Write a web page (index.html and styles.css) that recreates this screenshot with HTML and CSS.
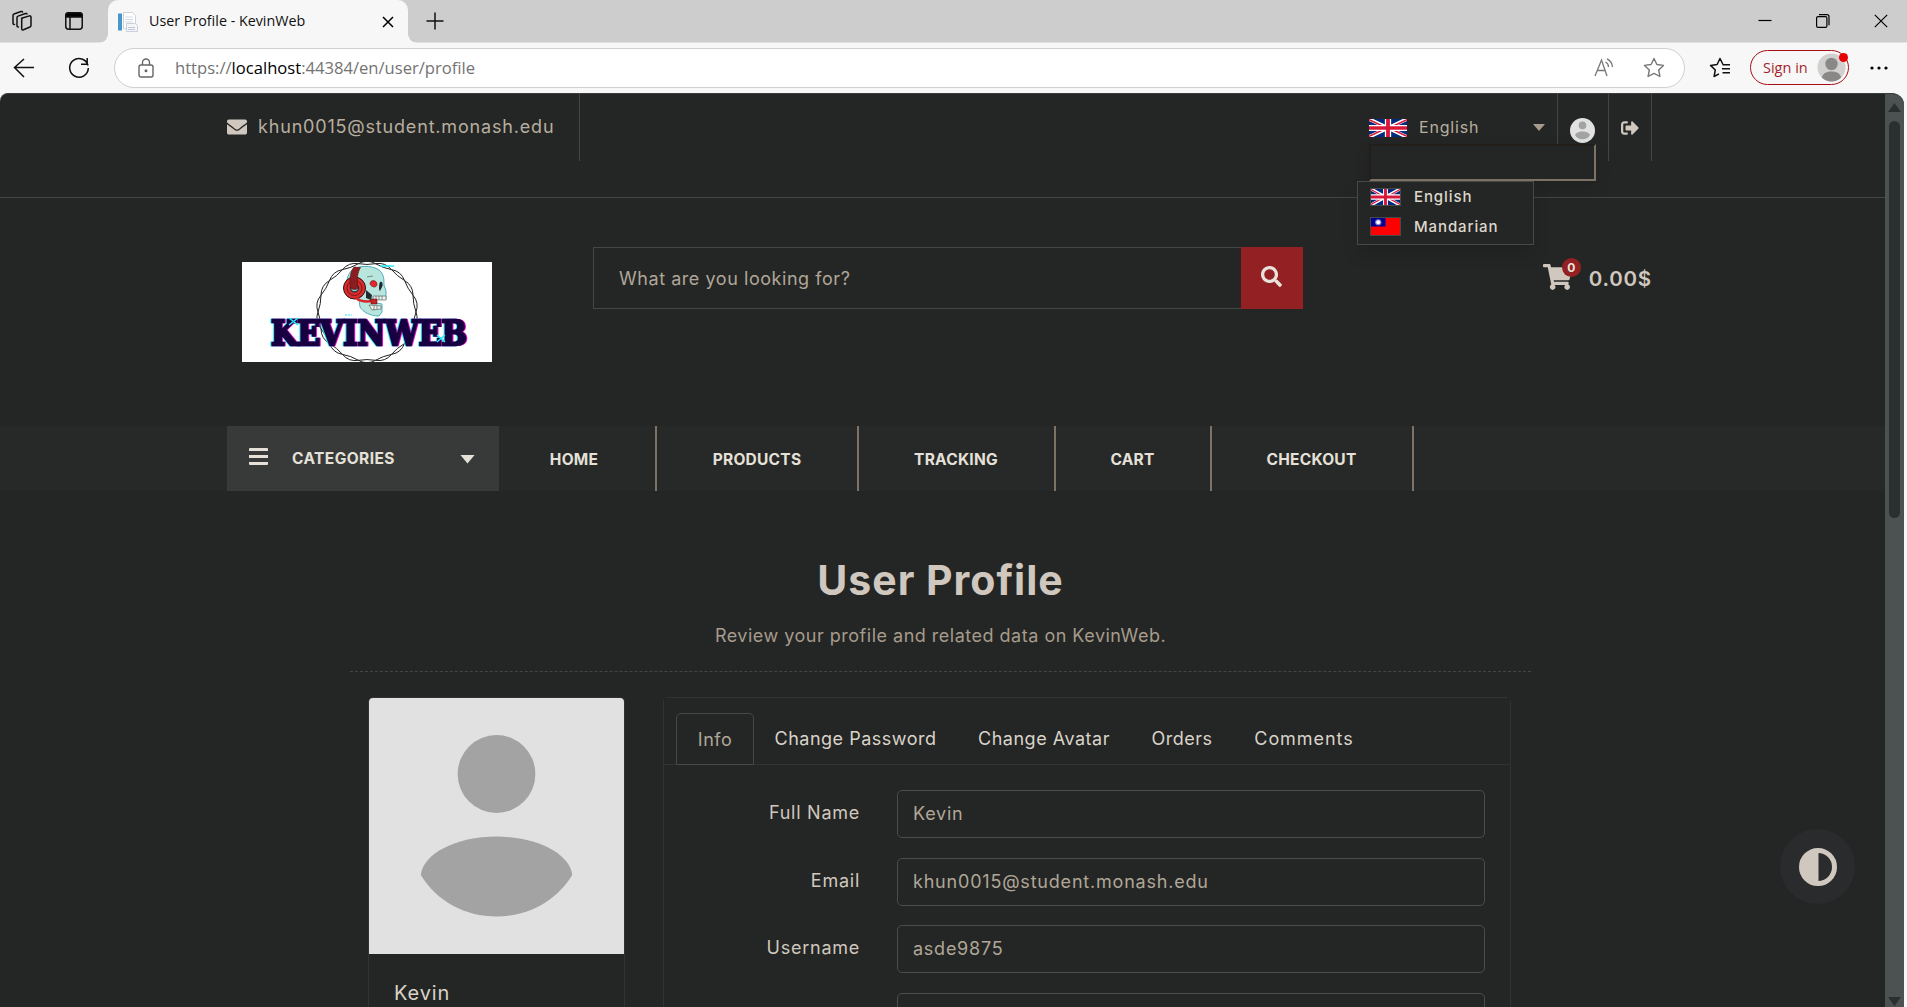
FILE: index.html
```html
<!DOCTYPE html>
<html lang="en">
<head>
<meta charset="utf-8">
<title>User Profile - KevinWeb</title>
<link rel="stylesheet" href="styles.css">
</head>
<body>
<svg width="0" height="0" class="defs" aria-hidden="true">
  <symbol id="uk" viewBox="0 0 60 30" preserveAspectRatio="none">
    <path fill="#012a7d" d="M0 0h60v30H0z"/>
    <path stroke="#fff" stroke-width="6" d="M0 0l60 30M60 0L0 30"/>
    <path stroke="#d8183a" stroke-width="2.4" d="M0 1l28 14M60 29L32 15M60 1L32 15M0 29l28-14"/>
    <path stroke="#fff" stroke-width="10" d="M30 0v30M0 15h60"/>
    <path stroke="#d8183a" stroke-width="6" d="M30 0v30M0 15h60"/>
  </symbol>
  <symbol id="tw" viewBox="0 0 30 18" preserveAspectRatio="none">
    <path fill="#fe0000" d="M0 0h30v18H0z"/><path fill="#000095" d="M0 0h15v9H0z"/>
    <circle cx="7.5" cy="4.5" r="3.3" fill="#8080ca"/><circle cx="7.5" cy="4.5" r="2" fill="#fff"/>
  </symbol>
  <symbol id="person" viewBox="0 0 256 256">
    <path fill="#e1e1e1" d="M0 0h256v256H0z"/>
    <circle cx="128" cy="76" r="39" fill="#a3a3a3"/>
    <path fill="#a3a3a3" d="M52 177C54 156 87 138.500 128 138.500S202 156 204 177C188 203 160 218.500 128 218.500S68 203 52 177z"/>
  </symbol>
</svg>

<header class="tabbar">
  <svg class="i-spaces" width="22" height="22" viewBox="0 0 22 22" fill="none" stroke="#111" stroke-width="1.500" stroke-linejoin="round" stroke-linecap="round"><path d="M10.500 8.300l8-2.400c.8-.2 1.500.3 1.500 1.100v8.500c0 .7-.3 1.200-1 1.500l-6.500 2.800c-1 .4-1.800 0-1.800-1V9.800c0-.7.200-1.200.8-1.500z"/><path d="M7.500 17c-.9.100-1.500-.4-1.500-1.300V7.500c0-.7.300-1.200 1-1.400l7.500-2.600c.8-.2 1.400 0 1.500.6M3.500 14.500c-.9.100-1.500-.4-1.500-1.300V5.500c0-.8.300-1.300 1-1.500l7-2.500c.8-.2 1.400 0 1.500.6"/></svg>
  <svg class="i-actions" width="18" height="18" viewBox="0 0 18 18" fill="none" stroke="#111" stroke-width="1.500"><rect x=".75" y=".75" width="16.500" height="16.500" rx="3"/><path fill="#000" d="M1 5V3a2 2 0 0 1 2-2h12a2 2 0 0 1 2 2v2z"/><path d="M5 5v12"/></svg>
  <div class="tab">
    <svg width="22" height="22" viewBox="0 0 22 22"><path fill="#fff" stroke="#ccd3dc" d="M6.500 1.500h9l3 3v13h-12z"/><path fill="#4797cc" d="M1 2.500h4v17H1z"/><path stroke="#d3d9e3" d="M8 6h8M8 8.500h8M8 11h8"/><path fill="#f4f5f7" stroke="#ccd0da" d="M9.500 12.500h9l2 2v6h-11z"/><path stroke="#c3c6d8" d="M11 16.500h7M11 18.500h7"/></svg>
    <span class="tab-title">User Profile - KevinWeb</span>
    <svg width="12" height="12" viewBox="0 0 12 12" stroke="#000" stroke-width="1.500"><path d="M1 1l10 10M11 1L1 11"/></svg>
  </div>
  <svg class="i-plus" width="18" height="18" viewBox="0 0 18 18" stroke="#111" stroke-width="1.500"><path d="M9 .5v17M.5 9h17"/></svg>
  <div class="win-controls">
    <svg width="14" height="14" viewBox="0 0 14 14" stroke="#000" stroke-width="1.200"><path d="M.5 6.500h13"/></svg>
    <svg width="14" height="14" viewBox="0 0 14 14" fill="none" stroke="#000" stroke-width="1.200"><rect x=".6" y="2.600" width="10.300" height="10.800" rx="1.500"/><path d="M3 .7h8a2 2 0 0 1 2 2v8.600"/></svg>
    <svg width="14" height="14" viewBox="0 0 14 14" stroke="#000" stroke-width="1.200"><path d="M.8.8l12.400 12.400M13.200.8L.8 13.200"/></svg>
  </div>
</header>

<div class="toolbar">
  <svg class="i-back" width="22" height="20" viewBox="0 0 22 20" fill="none" stroke="#111" stroke-width="1.500"><path d="M21 9.500H1.500M11 1L1.500 9.500 11 19"/></svg>
  <svg class="i-reload" width="22" height="22" viewBox="0 0 22 22" fill="none" stroke="#111" stroke-width="1.500"><path d="M20 8.500A9.300 9.300 0 1 0 20.300 11M19.200 1v6.200H13"/></svg>
  <div class="address">
    <svg width="16" height="20" viewBox="0 0 16 20" fill="none" stroke="#666" stroke-width="1.400"><rect x="1" y="7" width="14" height="12" rx="2"/><path d="M4.500 7V4.500a3.500 3.500 0 0 1 7 0V7"/><circle cx="8" cy="12.700" r=".8" fill="#666"/></svg>
    <span class="url">https://<b>localhost</b>:44384/en/user/profile</span>
    <svg class="i-read" width="20" height="19" viewBox="0 0 20 19" fill="none" stroke="#777" stroke-width="1.300"><path d="M1 18L7.500 2 13 18M3.300 12.500h7.800M11.500 4c2 1 3 2.800 3 5M13 .8c3.300 1.700 5.300 4.700 5.500 8.200"/></svg>
    <svg class="i-star" width="22" height="21" viewBox="0 0 22 21" fill="none" stroke="#777" stroke-width="1.400" stroke-linejoin="round"><path d="M11 1.500l2.900 6 6.600.9-4.800 4.600 1.200 6.500L11 16.400l-5.900 3.100L6.300 13 1.500 8.400l6.600-.9z"/></svg>
  </div>
  <svg class="i-fav" width="22" height="21" viewBox="0 0 22 21" fill="none" stroke="#111" stroke-width="1.500" stroke-linejoin="round"><path d="M14 7.500L11 1.500l-2.900 6-6.600.9L6.300 13l-1.200 6.500 4.900-2.600M13.500 7.800H21M13 11.800h8M13.500 15.800H21"/></svg>
  <div class="signin">Sign in
    <svg width="29" height="29" viewBox="0 0 29 29"><circle cx="14.500" cy="14.500" r="14" fill="#d2d0ce"/><circle cx="14.500" cy="11" r="6.200" fill="#8a8886"/><path fill="#8a8886" d="M4.800 24.500C6 20 10 18.500 14.500 18.500s8.500 1.500 9.700 6A14 14 0 0 1 4.800 24.500z"/></svg>
    <i class="dot"></i>
  </div>
  <svg class="i-more" width="18" height="4" viewBox="0 0 18 4"><circle cx="2" cy="2" r="1.600"/><circle cx="9" cy="2" r="1.600"/><circle cx="16" cy="2" r="1.600"/></svg>
</div>

<div class="viewport">
<div class="page">
  <div class="topbar"><div class="wrap topbar-in">
    <div class="mail">
      <svg width="20" height="20" viewBox="0 0 512 512" fill="#d0c8be"><path d="M502.300 190.800c3.900-3.100 9.700-.2 9.700 4.700V400c0 26.500-21.500 48-48 48H48c-26.500 0-48-21.500-48-48V195.600c0-5 5.700-7.800 9.700-4.700 22.400 17.400 52.100 39.500 154.100 113.600 21.100 15.400 56.700 47.800 92.200 47.600 35.700.3 72-32.800 92.300-47.600 102-74.100 131.600-96.300 154-113.700zM256 320c23.200.4 56.600-29.200 73.400-41.400 132.700-96.300 142.800-104.700 173.400-128.700 5.800-4.500 9.200-11.500 9.200-18.900v-19c0-26.500-21.500-48-48-48H48c-26.500 0-48 21.500-48 48v19c0 7.400 3.400 14.300 9.200 18.900 30.600 23.900 40.700 32.400 173.400 128.700 16.800 12.200 50.200 41.800 73.400 41.400z"/></svg>
      <span>khun0015@student.monash.edu</span>
    </div>
    <div class="top-actions">
      <div class="lang"><svg width="38" height="18"><use href="#uk"/></svg><span>English</span><i class="caret"></i></div>
      <div class="user"><svg width="25" height="25"><use href="#person"/></svg></div>
      <div class="logout"><svg width="18" height="18" viewBox="0 0 512 512" fill="#d0c8be"><path d="M497 273L329 441c-15 15-41 4.500-41-17v-96H152c-13.300 0-24-10.700-24-24v-96c0-13.300 10.700-24 24-24h136V88c0-21.400 25.900-32 41-17l168 168c9.300 9.400 9.300 24.600 0 34zM192 436v-40c0-6.600-5.400-12-12-12H96c-17.700 0-32-14.300-32-32V160c0-17.700 14.300-32 32-32h84c6.600 0 12-5.400 12-12V76c0-6.600-5.400-12-12-12H96c-53 0-96 43-96 96v192c0 53 43 96 96 96h84c6.600 0 12-5.400 12-12z"/></svg></div>
      <div class="lang-search"></div>
      <ul class="lang-menu">
        <li><svg width="31" height="18"><use href="#uk"/></svg>English</li>
        <li><svg width="31" height="19"><use href="#tw"/></svg>Mandarian</li>
      </ul>
    </div>
  </div></div>

  <div class="wrap masthead">
    <svg class="logo" width="250" height="100" viewBox="0 0 250 100">
      <path fill="#fff" d="M0 0h250v100H0z"/>
      <g transform="translate(125 50)" fill="none" stroke="#222">
        <path d="M49 0A17 17 0 0 1 46 16.800A50 50 0 0 0 37.500 31.500A17 17 0 0 1 24.500 42.400A50 50 0 0 0 8.500 48.300A17 17 0 0 1-8.500 48.300A50 50 0 0 0-24.500 42.400A17 17 0 0 1-37.500 31.500A50 50 0 0 0-46 16.800A17 17 0 0 1-49 0A50 50 0 0 0-46-16.800A17 17 0 0 1-37.500-31.500A50 50 0 0 0-24.500-42.400A17 17 0 0 1-8.500-48.300A50 50 0 0 0 8.500-48.300A17 17 0 0 1 24.500-42.400A50 50 0 0 0 37.500-31.500A17 17 0 0 1 46-16.800A50 50 0 0 0 49 0"/>
        <path d="M49 0A50 50 0 0 0 46 16.800A17 17 0 0 1 37.500 31.500A50 50 0 0 0 24.500 42.400A17 17 0 0 1 8.500 48.300A50 50 0 0 0-8.500 48.300A17 17 0 0 1-24.500 42.400A50 50 0 0 0-37.500 31.500A17 17 0 0 1-46 16.800A50 50 0 0 0-49 0A17 17 0 0 1-46-16.800A50 50 0 0 0-37.500-31.500A17 17 0 0 1-24.500-42.400A50 50 0 0 0-8.500-48.300A17 17 0 0 1 8.500-48.300A50 50 0 0 0 24.500-42.400A17 17 0 0 1 37.500-31.500A50 50 0 0 0 46-16.800A17 17 0 0 1 49 0"/>
      </g>
      <path fill="#b8e6dc" stroke="#2b9cb8" stroke-width=".8" d="M109 9c6-6 21-6 28-1 5 4 5 9 5 15l2 6v8l-10-1-4 4 10 2v8l-3 4c-9 0-16-4-19-9l-1-7-6-4c-8-6-8-18-2-25z"/>
      <path fill="#202a30" d="M138 20c2-1 3 1 2.500 4l-2.500 5c-1.500-1-1-7 0-9zM124 28l6 5-1 5-5-2z"/>
      <path fill="#e8f4ec" stroke="#333" stroke-width=".5" d="M131 34h13v4h-13zM127 43l12 1v3l-9 1z"/>
      <path stroke="#333" stroke-width=".5" d="M134 34v4M137 34v4M140 34v4M132 44v4M135 44v3M125 15l6-1"/>
      <path fill="#e9252b" stroke="#4b1616" stroke-width=".6" d="M128 22c0-5 7-4 7 0s-5 4-7 0z"/>
      <circle cx="112.500" cy="26" r="11" fill="#dd2a2c" stroke="#251012"/><circle cx="112.500" cy="26" r="7.500" fill="none" stroke="#711719"/><circle cx="112.500" cy="26" r="4" fill="#8dd1d8" stroke="#27343a" stroke-width="1.500"/>
      <path fill="#8b1d20" stroke="#4b1616" stroke-width=".6" d="M108.500 26c-1.500-9 0-17 3.500-21l6.500.5c-3 5-4 12-2.500 20.500-2 2-5 2-7.500 0z"/>
      <path fill="none" stroke="#d6282b" stroke-width="2.500" d="M114 36c5 4 10 4 16 3"/><path fill="#c82226" stroke="#451013" stroke-width=".5" d="M129 37h6v5h-6z"/>
      <text class="logo-text" x="29" y="83" textLength="196" lengthAdjust="spacingAndGlyphs">KEVINWEB</text>
      <path stroke="#20f0fa" stroke-width="1.500" d="M47 56l9 7M56 56l-9 7M195 73l8 7M203 73l-8 7M138 4h14"/><path stroke="#20f0fa" stroke-dasharray="2 1" d="M103 53h7"/>
    </svg>
    <form class="search">
      <span class="search-field">What are you looking for?</span>
      <span class="search-btn"><svg width="21" height="21" viewBox="0 0 512 512" fill="#e8e3da"><path d="M505 442.700L405.300 343c-4.500-4.500-10.600-7-17-7H372c27.600-35.300 44-79.700 44-128C416 93.100 322.900 0 208 0S0 93.100 0 208s93.100 208 208 208c48.300 0 92.700-16.400 128-44v16.300c0 6.400 2.500 12.500 7 17l99.700 99.700c9.400 9.400 24.600 9.400 33.900 0l28.300-28.300c9.400-9.400 9.400-24.600.1-34zM208 336c-70.700 0-128-57.200-128-128 0-70.700 57.200-128 128-128 70.700 0 128 57.200 128 128 0 70.700-57.200 128-128 128z"/></svg></span>
    </form>
    <div class="cart">
      <svg width="29" height="26" viewBox="0 0 576 512" fill="#d0c8be"><path d="M528.100 301.300l47.300-208C578.800 78.300 567.400 64 552 64H159.200l-9.200-44.800C147.800 8 137.900 0 126.500 0H24C10.700 0 0 10.700 0 24v16c0 13.300 10.700 24 24 24h69.900l70.200 343.400C147.300 417.100 136 435.200 136 456c0 30.900 25.100 56 56 56s56-25.100 56-56c0-15.700-6.400-29.800-16.800-40h209.600C430.400 426.200 424 440.300 424 456c0 30.900 25.100 56 56 56s56-25.100 56-56c0-22.200-12.900-41.300-31.600-50.400l5.500-24.300c3.400-15-8-29.300-23.400-29.300H218.100l-6.500-32h293.100c11.200 0 20.900-7.800 23.400-18.700z"/></svg>
      <span class="badge">0</span>
      <span class="price">0.00$</span>
    </div>
  </div>

  <nav class="mainnav"><div class="wrap mainnav-in">
    <div class="categories"><i class="bars"></i><span>CATEGORIES</span><i class="caret-lg"></i></div>
    <a class="n-home">HOME</a><a class="n-products">PRODUCTS</a><a class="n-tracking">TRACKING</a><a class="n-cart">CART</a><a class="n-checkout">CHECKOUT</a>
  </div></nav>

  <main class="profile">
    <div class="heading"><h1>User Profile</h1><p>Review your profile and related data on KevinWeb.</p></div>
    <div class="columns">
      <aside class="user-card"><svg width="255" height="256" viewBox="0 0 256 256" preserveAspectRatio="none"><use href="#person"/></svg><h2>Kevin</h2></aside>
      <section class="panel">
        <div class="tabs"><a class="active">Info</a><a class="t-pass">Change Password</a><a class="t-avatar">Change Avatar</a><a class="t-orders">Orders</a><a class="t-comments">Comments</a></div>
        <div class="form">
          <label>Full Name</label><div class="input">Kevin</div>
          <label>Email</label><div class="input mailtext">khun0015@student.monash.edu</div>
          <label>Username</label><div class="input">asde9875</div>
          <label></label><div class="input"></div>
        </div>
      </section>
    </div>
  </main>
</div>
<div class="scrollbar"><i class="up"></i><i class="thumb"></i><i class="down"></i></div>
</div>
<div class="contrast"><svg width="38" height="38" viewBox="0 0 38 38"><circle cx="19" cy="19" r="16.500" fill="none" stroke="#d0c8be" stroke-width="5"/><path fill="#d0c8be" d="M19.500 1v36H19a18 18 0 0 1 0-36z"/></svg></div>
</body>
</html>
```
FILE: styles.css
```css
* { box-sizing: border-box; }
body { margin: 0; width: 1907px; height: 1007px; overflow: hidden; background: #f7f7f7; font-family: "Open Sans", sans-serif; }
svg { display: block; flex: none; }
.defs { position: absolute; }
h1, h2, p, ul { margin: 0; padding: 0; font-weight: normal; list-style: none; }

/* browser frame */
.tabbar { display: flex; align-items: center; height: 43px; background: #cdcdcd; border-bottom: 1px solid #e2e2e2; }
.i-spaces { margin-left: 11px; }
.i-actions { margin-left: 32px; }
.tab { position: relative; display: flex; align-items: center; width: 300px; height: 43px; margin: 0 0 -1px 25px; padding: 0 14px 0 9px; background: #f7f7f7; border-radius: 10px 10px 0 0; }
.tab::before, .tab::after { content: ""; position: absolute; bottom: 0; width: 9px; height: 9px; }
.tab::before { left: -9px; background: radial-gradient(circle at 0 0, transparent 8.5px, #f7f7f7 9px); }
.tab::after { right: -9px; background: radial-gradient(circle at 100% 0, transparent 8.5px, #f7f7f7 9px); }
.tab-title { flex: 1; margin-left: 10px; padding-bottom: 2px; font-size: 14.3px; line-height: 20px; color: #111; white-space: nowrap; }
.i-plus { margin-left: 18px; }
.win-controls { display: flex; gap: 44px; margin: 0 19px 0 auto; }
.toolbar { display: flex; align-items: center; height: 50px; padding-bottom: 1px; background: #f7f7f7; }
.i-back { margin-left: 13px; }
.i-reload { margin-left: 33px; }
.address { display: flex; align-items: center; width: 1571px; height: 40px; margin-left: 24px; padding: 0 19px 0 23px; border: 1px solid #cfcfcf; border-radius: 20px; background: #fff; }
.url { flex: 1; margin-left: 21px; padding-bottom: 1px; font-size: 16.6px; color: #737373; }
.url b { font-weight: normal; color: #000; }
.i-star { margin-left: 29px; }
.i-fav { margin-left: 24px; }
.signin { position: relative; display: flex; align-items: center; justify-content: space-between; width: 99px; height: 35px; margin-left: 19px; padding: 0 2px 0 12px; border: 1.5px solid #a80f14; border-radius: 18px; color: #a4262c; font-size: 14.5px; white-space: nowrap; }
.dot { position: absolute; top: 2px; right: 0; width: 9px; height: 9px; border-radius: 50%; background: #e60000; }
.i-more { margin-left: 21px; }

/* web page */
.viewport { display: flex; width: 1904px; height: 914px; overflow: hidden; border-top: 1px solid #3c3e3d; border-radius: 8px 12px 0 0; background: #242625; font-family: Inter, sans-serif; color: #d0c8be; letter-spacing: .5px; }
.page { width: 1885px; flex: none; }
.wrap { width: 1425px; margin-left: 227px; }
.topbar { height: 104px; border-bottom: 1px solid #434645; }
.topbar-in { display: flex; justify-content: space-between; }
.mail { display: flex; align-items: center; gap: 11px; width: 353px; height: 67px; padding-bottom: 2px; border-right: 1px solid #434645; font-size: 18px; letter-spacing: .82px; color: #b8ae9f; }
.top-actions { position: relative; display: flex; height: 67px; }
.lang, .user, .logout { display: flex; align-items: center; border-right: 1px solid #434645; }
.lang { width: 189px; font-size: 16px; letter-spacing: .8px; color: #b8ae9f; }
.lang span { flex: 1; margin-left: 12px; padding-bottom: 1px; }
.caret { width: 12px; height: 7px; margin-right: 12px; background: #a69b8c; clip-path: polygon(0 0, 100% 0, 50% 100%); }
.user { width: 51px; justify-content: center; padding: 6px 2px 0 0; }
.user svg { border-radius: 50%; }
.logout { width: 43px; padding-left: 12px; padding-top: 1px; }
.lang-search { position: absolute; left: 0; top: 50px; width: 227px; height: 37px; border: 2px solid; border-color: #221e1a #7d7263 #7d7263 #221e1a; background: #242625; box-shadow: 0 6px 16px rgba(0,0,0,.12); }
.lang-menu { position: absolute; left: -12px; top: 87px; width: 177px; height: 64px; padding-left: 12px; border: 1px solid #464948; background: #242625; box-shadow: 0 10px 16px rgba(0,0,0,.12); font-size: 15px; font-weight: 500; line-height: 18px; letter-spacing: .9px; color: #ddd7cc; }
.lang-menu li { display: flex; align-items: center; gap: 13px; height: 30px; padding-bottom: 1px; }
.lang-menu li svg { border: 1px solid #464948; }

.masthead { display: flex; align-items: flex-start; height: 228px; padding-top: 49px; }
.logo { margin: 15px 101px 0 15px; }
.logo-text { font: bold 33px "DejaVu Serif", serif; letter-spacing: 0; fill: #180040; stroke: #180040; stroke-width: 2.4px; filter: drop-shadow(1px 0 0 #e010d0) drop-shadow(-1px 0 0 #25e9f5); }
.search { display: flex; width: 710px; height: 62px; }
.search-field { flex: 1; padding-left: 25px; border: 1px solid #434645; border-right: 0; font-size: 18px; line-height: 62px; letter-spacing: .55px; color: #b0a698; }
.search-btn { display: flex; align-items: center; justify-content: center; width: 62px; background: #932022; padding: 0 1px 4px 0; }
.cart { position: relative; display: flex; align-items: center; height: 62px; margin-left: auto; }
.cart > svg { margin-bottom: 2px; }
.price { margin-left: 17px; font-size: 20.5px; font-weight: 600; letter-spacing: .8px; }
.badge { position: absolute; left: 19px; top: 11px; width: 19px; height: 19px; border-radius: 50%; background: #932022; font-size: 12px; font-weight: 700; line-height: 19px; letter-spacing: 0; text-align: center; color: #e8e3da; }

.mainnav { height: 65px; background: #272929; }
.mainnav-in { display: flex; height: 65px; font-size: 15.5px; font-weight: 700; line-height: 67px; letter-spacing: .25px; color: #e6e1d8; }
.mainnav a { border-right: 2px solid #7d7263; text-align: center; }
.n-home { width: 158px; padding-right: 6px; }
.n-products { width: 202px; }
.n-tracking { width: 197px; padding-right: 1px; }
.n-cart { width: 156px; padding-right: 1px; }
.n-checkout { width: 202px; padding-right: 1px; }
.categories { display: flex; align-items: center; width: 272px; height: 65px; padding: 0 24px 0 22px; background: #383a39; }
.categories span { flex: 1; margin-left: 24px; letter-spacing: .42px; }
.bars { width: 19px; height: 17px; margin-bottom: 5px; border-radius: 1px; background: linear-gradient(#e6e1d8 3px, transparent 3px 7px, #e6e1d8 7px 10px, transparent 10px 14px, #e6e1d8 14px); }
.caret-lg { width: 15px; height: 9px; margin-top: 1px; background: #e6e1d8; clip-path: polygon(0 0, 100% 0, 50% 100%); }

.profile { width: 1181px; margin-left: 350px; }
.heading { padding: 64px 0 22px; border-bottom: 1px dashed #434645; text-align: center; }
.heading h1 { font-size: 41px; font-weight: 650; line-height: 50px; letter-spacing: 1px; }
.heading p { margin-top: 18px; font-size: 18px; line-height: 26px; letter-spacing: .5px; color: #a69b8c; }
.columns { display: flex; gap: 38px; padding: 25px 18px 0; }
.user-card { width: 257px; height: 400px; border: 1px solid #303332; border-radius: 5px; overflow: hidden; }
.user-card h2 { padding: 26px 0 0 25px; font-size: 20px; line-height: 26px; letter-spacing: .9px; color: #d9d3c8; }
.panel { width: 848px; height: 400px; border: 1px solid #303332; border-radius: 5px; }
.tabs { display: flex; height: 67px; padding: 15px 0 0 12px; border-bottom: 1px solid #353233; background: #242525; font-size: 18px; line-height: 52px; letter-spacing: .5px; text-align: center; white-space: nowrap; color: #d9d3c8; }
.tabs .active { width: 78px; height: 52px; border: 1px solid #464948; border-radius: 5px 5px 0 0; background: #242625; line-height: 51px; color: #b0a698; }
.t-pass { width: 203px; }
.t-avatar { width: 174px; }
.t-orders { width: 102px; }
.t-comments { width: 142px; letter-spacing: .95px !important; }
.form { display: grid; grid-template-columns: 196px 588px; column-gap: 37px; grid-auto-rows: 48px; row-gap: 19.5px; padding-top: 25px; font-size: 18px; line-height: 46px; letter-spacing: .75px; }
.form label { text-align: right; }
.input { padding-left: 15px; border: 1px solid #4a4d4c; border-radius: 5px; color: #b0a698; }
.mailtext { letter-spacing: .8px; }

.scrollbar { display: flex; flex-direction: column; align-items: center; width: 19px; padding: 9px 0 1px; background: #4c5151; }
.up, .down { width: 13px; height: 9px; background: #2b2f2f; clip-path: polygon(50% 0, 100% 100%, 0 100%); }
.down { margin-top: auto; transform: rotate(180deg); }
.thumb { width: 11px; height: 397px; margin-top: 9px; border-radius: 6px; background: #2b2f2f; }
.contrast { position: fixed; left: 1780px; top: 829px; display: flex; align-items: center; justify-content: center; width: 75px; height: 75px; border-radius: 50%; background: #2a2b2d; }
```
